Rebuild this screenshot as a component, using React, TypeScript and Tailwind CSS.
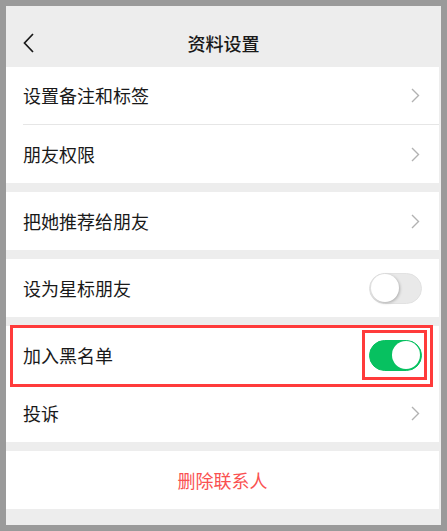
const font = { fontFamily: '"Noto Sans CJK SC", "Noto Sans", sans-serif' }

function Arrow() {
  return (
    <svg width="9" height="15" viewBox="0 0 9 15" className="mr-[2px]">
      <polyline points="1,1 7.5,7.5 1,14" fill="none" stroke="#b2b2b2" strokeWidth="1.4" />
    </svg>
  )
}

function Row({ label, divider = false, children }: { label: string; divider?: boolean; children?: React.ReactNode }) {
  return (
    <div className="flex h-[58px] items-stretch bg-white mr-[2px] pl-[17px]">
      <div className={`flex flex-1 items-center pr-[17px] ${divider ? "border-b border-[#e6e6e6]" : ""}`}>
        <span className="flex-1 text-[18px] text-[#191919]">{label}</span>
        {children ?? <Arrow />}
      </div>
    </div>
  )
}

function Toggle({ on }: { on: boolean }) {
  return on ? (
    <div className="w-[53px] h-[31px] rounded-full bg-[#07c160] border border-[#07c160] flex items-center justify-end p-[1px]">
      <div className="w-[28px] h-[28px] rounded-full bg-white" />
    </div>
  ) : (
    <div className="w-[53px] h-[31px] rounded-full bg-[#e9e9e9] border border-[#e2e2e2] flex items-center p-[1px]">
      <div className="w-[28px] h-[28px] rounded-full bg-white shadow-[1px_1px_3px_rgba(0,0,0,0.25)]" />
    </div>
  )
}

export default function App() {
  return (
    <div className="w-[447px] h-[531px] bg-[#9a9a9a] p-[6px]" style={font}>
      <div className="h-full bg-[#ededed] flex flex-col">
        {/* 顶部导航 */}
        <div className="relative h-[61px] flex items-center justify-center pt-[14px]">
          <svg width="11" height="20" viewBox="0 0 11 20" className="absolute left-[17px] top-[27px]">
            <polyline points="10,1 1.5,10 10,19" fill="none" stroke="#191919" strokeWidth="1.7" />
          </svg>
          <span className="text-[18px] font-medium text-[#191919]">资料设置</span>
        </div>

        <Row label="设置备注和标签" divider />
        <Row label="朋友权限" />

        <div className="h-[9px]" />
        <Row label="把她推荐给朋友" />

        <div className="h-[9px]" />
        <Row label="设为星标朋友">
          <Toggle on={false} />
        </Row>

        <div className="h-[9px]" />
        <div className="relative">
          <Row label="加入黑名单">
            <Toggle on />
          </Row>
          <div className="absolute left-[4px] top-[-1px] w-[423px] h-[62px] border-[3px] border-[#ff3b3b]" />
          <div className="absolute left-[356px] top-[4px] w-[65px] h-[50px] border-[3px] border-[#ff3b3b]" />
        </div>
        <Row label="投诉" />

        <div className="h-[9px]" />
        <div className="h-[58px] mr-[2px] bg-white flex items-center justify-center">
          <span className="text-[18px] text-[#fa5151]">删除联系人</span>
        </div>
      </div>
    </div>
  )
}
